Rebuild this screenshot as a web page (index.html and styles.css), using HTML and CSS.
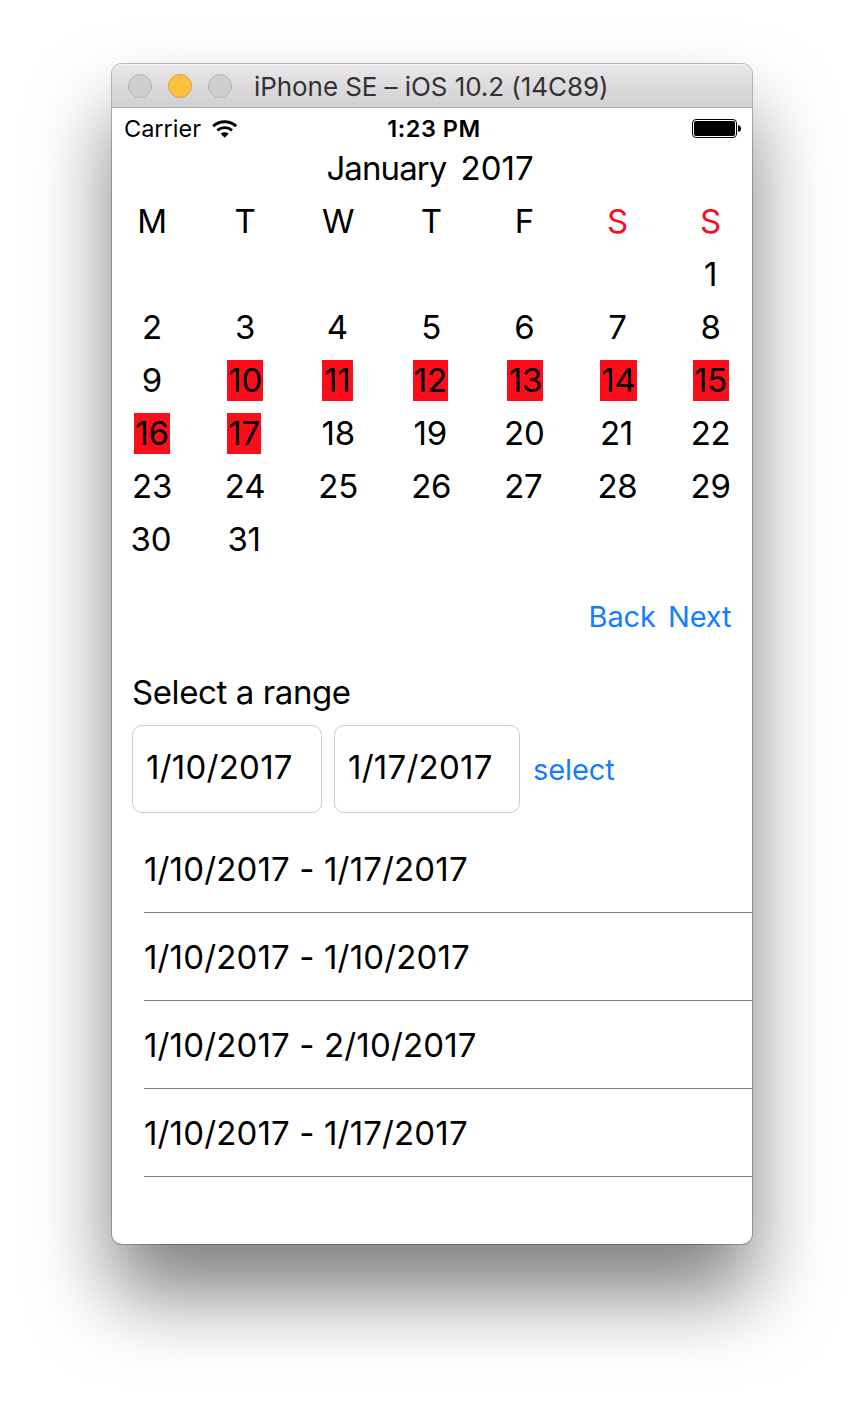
FILE: index.html
```html
<!DOCTYPE html>
<html lang="en">
<head>
<meta charset="utf-8">
<title>iPhone SE – iOS 10.2 (14C89)</title>
<link rel="stylesheet" href="styles.css">
</head>
<body>
<main class="window">
  <header class="titlebar">
    <span class="light"></span><span class="light light-min"></span><span class="light"></span>
    <span class="title">iPhone SE – iOS 10.2 (14C89)</span>
  </header>
  <div class="status">
    <div class="carrier"><span>Carrier</span>
      <svg class="wifi" width="26" height="18" viewBox="0 0 26 18" fill="none" stroke="#000">
        <path d="M1.2 6.2A17 17 0 0 1 24.2 6.2" stroke-width="3"/>
        <path d="M5.4 10.4A11 11 0 0 1 20 10.4" stroke-width="2.8"/>
        <path d="M12.7 17.8L8.7 13.8Q12.7 10.9 16.7 13.8Z" fill="#000" stroke="none"/>
      </svg>
    </div>
    <span class="time">1:23 PM</span>
    <svg class="battery" width="49" height="19" viewBox="0 0 49 19">
      <rect x="0.5" y="0.5" width="44" height="18" rx="3.5" fill="#fff" stroke="#000"/>
      <rect x="2" y="2" width="41" height="15" rx="2" fill="#000"/>
      <path d="M46 6.2C48.2 6.2 49 7.5 49 9.5S48.2 12.8 46 12.8Z" fill="#000"/>
    </svg>
  </div>
  <div class="month"><span class="month-name">January</span><span>2017</span></div>
  <section class="calendar">
    <span>M</span><span>T</span><span>W</span><span>T</span><span>F</span><span class="weekend">S</span><span class="weekend">S</span>
    <span class="first">1</span>
    <span>2</span><span>3</span><span class="left">4</span><span>5</span><span>6</span><span>7</span><span>8</span>
    <span>9</span><span class="on w36">10</span><span class="on w31 left">11</span><span class="on w35 left">12</span><span class="on w36 right">13</span><span class="on w37 right">14</span><span class="on w36">15</span>
    <span class="on w36">16</span><span class="on w34 left">17</span><span>18</span><span class="left">19</span><span>20</span><span class="left">21</span><span>22</span>
    <span>23</span><span>24</span><span>25</span><span>26</span><span class="left">27</span><span>28</span><span>29</span>
    <span class="left">30</span><span class="left">31</span>
  </section>
  <nav class="pager"><a class="link">Back</a><a class="link">Next</a></nav>
  <h2 class="label">Select a range</h2>
  <div class="range">
    <div class="field from">1/10/2017</div>
    <div class="field to">1/17/2017</div>
    <a class="link">select</a>
  </div>
  <ul class="list">
    <li>1/10/2017 - 1/17/2017</li>
    <li>1/10/2017 - 1/10/2017</li>
    <li>1/10/2017 - 2/10/2017</li>
    <li>1/10/2017 - 1/17/2017</li>
  </ul>
</main>
</body>
</html>
```

FILE: styles.css
```css
* { box-sizing: border-box; }
body {
  margin: 0;
  height: 1404px;
  padding: 64px 112px 0;
  background: #fff;
  color: #000;
  font: 400 33px/41px Inter, "Liberation Sans", sans-serif;
  overflow: hidden;
}
.window {
  width: 640px;
  height: 1180px;
  border-radius: 10px;
  background: #fff;
  box-shadow: 0 0 0 1px rgba(0, 0, 0, .25), 0 50px 80px rgba(0, 0, 0, .5);
}
.titlebar {
  display: flex;
  align-items: center;
  gap: 16px;
  height: 44px;
  padding-left: 16px;
  border-radius: 10px 10px 0 0;
  border-bottom: 1px solid #b1aeb1;
  background: linear-gradient(#e9e7e9, #d2d0d2);
  box-shadow: inset 0 1px #f4f3f4;
}
.light {
  width: 24px;
  height: 24px;
  border: 1px solid #b3b3b3;
  border-radius: 50%;
  background: #cfcfcf;
}
.light-min { border-color: #dfa03a; background: #ffbf40; }
.title {
  margin-left: 6px;
  padding-top: 2px;
  color: #333133;
  font-size: 26px;
  letter-spacing: -.07px;
  white-space: nowrap;
}
.status {
  display: grid;
  grid-template-columns: 1fr auto 1fr;
  align-items: center;
  height: 40px;
  padding: 0 11px 0 12px;
  font-size: 24px;
}
.carrier { display: flex; align-items: center; gap: 11px; font-size: 23.5px; }
.time { padding-left: 3px; font-weight: 600; font-size: 23.5px; letter-spacing: .5px; }
.battery { justify-self: end; }
.month {
  display: flex;
  justify-content: center;
  gap: 14px;
  padding-right: 4px;
}
.month-name { letter-spacing: -.9px; }
.calendar {
  display: grid;
  grid-template-columns: repeat(7, 40px);
  grid-auto-rows: 41px;
  gap: 12px 53.1px;
  justify-items: center;
  padding: 12px 0 0 20px;
  letter-spacing: -.2px;
}
.first { grid-column: 7; }
.weekend { color: #fc0d1b; }
.on {
  display: flex;
  justify-content: center;
  background: #fc0d1b;
}
.left { margin-right: 2px; }
.right { margin-left: 2px; }
.w31 { width: 31px; }
.w34 { width: 34px; }
.w35 { width: 35px; }
.w36 { width: 36px; }
.w37 { width: 37px; }
.link { color: #157efb; font-size: 29px; letter-spacing: -.1px; }
.pager {
  display: flex;
  justify-content: flex-end;
  gap: 12px;
  padding: 36px 20.5px 0 0;
}
.label { margin: 35px 0 0 20px; font-size: 33px; font-weight: 400; letter-spacing: -.4px; }
.range { display: flex; align-items: center; padding: 12px 0 0 20px; }
.field {
  height: 88px;
  padding: 21px 0 0 13px;
  border: 1px solid #ccc;
  border-radius: 10px;
  letter-spacing: .25px;
}
.from { width: 190px; margin-right: 12px; }
.to { width: 186px; margin-right: 13px; }
.list { margin: 12px 0 0 32px; padding: 0; list-style: none; letter-spacing: .15px; }
.list li { height: 88px; padding-top: 24px; border-bottom: 1px solid #808080; }
```
